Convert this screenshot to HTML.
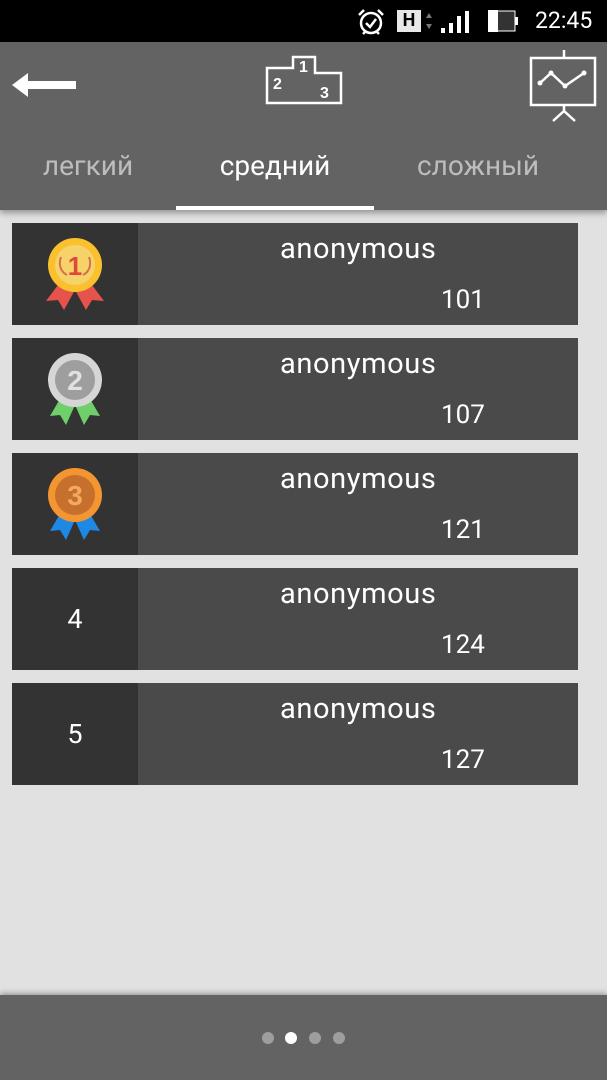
<!DOCTYPE html>
<html><head><meta charset="utf-8"><style>
*{margin:0;padding:0;box-sizing:border-box}
body{width:607px;height:1080px;background:#e1e1e1;font-family:"Roboto","Liberation Sans",sans-serif;position:relative;overflow:hidden}
.sb{position:absolute;left:0;top:0;width:607px;height:42px;background:#000;color:#fff}
.tb{position:absolute;left:0;top:42px;width:607px;height:168px;background:#636363;box-shadow:0 3px 6px rgba(0,0,0,.35)}
.tab{position:absolute;font-size:28px;color:#bdbdbd;text-align:center;width:200px}
.row{position:absolute;left:12px;width:566px;height:102px;background:#4a4a4a}
.row .l{position:absolute;left:0;top:0;width:126px;height:102px;background:#333;color:#fff;font-size:27px;text-align:center;line-height:102px}
.row .n{position:absolute;left:268px;top:9px;color:#fff;font-size:29px;letter-spacing:0.6px}
.row .s{position:absolute;left:429px;top:62px;color:#fff;font-size:26px}
.bb{position:absolute;left:0;top:995px;width:607px;height:85px;background:#636363;box-shadow:0 -2px 5px rgba(0,0,0,.3)}
.dot{position:absolute;top:1032px;width:12px;height:12px;border-radius:50%;background:#9e9e9e}
</style></head><body>
<div class="sb">
<svg style="position:absolute;left:355px;top:7px" width="32" height="30" viewBox="0 0 32 30"><circle cx="16" cy="16" r="10" fill="none" stroke="#fff" stroke-width="2.5"/><path d="M11 16l4 4 6-8" stroke="#fff" stroke-width="2.5" fill="none"/><path d="M4 8l5-5M28 8l-5-5M8 27l3-3M24 27l-3-3" stroke="#fff" stroke-width="2.5"/></svg>
<div style="position:absolute;left:397px;top:10px;width:24px;height:22px;background:#e8e8e8;color:#000;font-weight:bold;font-size:18px;text-align:center;line-height:22px">H</div>
<svg style="position:absolute;left:424px;top:10px" width="46" height="24"><path d="M2 8l3-5 3 5zM2 14l3 5 3-5z" fill="#777"/><rect x="17" y="18" width="4" height="5" fill="#fff"/><rect x="25" y="13" width="4" height="10" fill="#fff"/><rect x="33" y="6" width="4" height="17" fill="#fff"/><rect x="41" y="1" width="4" height="22" fill="#fff"/></svg>
<svg style="position:absolute;left:488px;top:10px" width="32" height="22"><rect x="1" y="1" width="26" height="20" fill="#333" stroke="#fff" stroke-width="1"/><rect x="0" y="0" width="10" height="22" fill="#fff"/><rect x="27" y="7" width="3" height="8" fill="#fff"/></svg>
<div style="position:absolute;left:535px;top:7px;font-size:23px">22:45</div>
</div>
<div class="tb">
<svg style="position:absolute;left:10px;top:26px" width="66" height="34"><path d="M2 17L18 5v8h56v8H18v8z" fill="#fff"/></svg>
<svg style="position:absolute;left:264px;top:6px" width="80" height="58" viewBox="0 0 80 58"><path d="M3 37V20h26V9h22v16h26v30H3z" fill="none" stroke="#fff" stroke-width="2.5"/><text x="35" y="24" fill="#fff" font-size="16" font-weight="bold" font-family="Liberation Sans">1</text><text x="9" y="41" fill="#fff" font-size="16" font-weight="bold" font-family="Liberation Sans">2</text><text x="56" y="50" fill="#fff" font-size="16" font-weight="bold" font-family="Liberation Sans">3</text></svg>
<svg style="position:absolute;left:528px;top:8px" width="72" height="72" viewBox="0 0 72 72"><path d="M36 0v8" stroke="#fff" stroke-width="2.5"/><rect x="3" y="8" width="64" height="47" fill="none" stroke="#fff" stroke-width="2.5"/><path d="M12 33l11-10 14 13 19-13" stroke="#fff" stroke-width="2.5" fill="none"/><circle cx="12" cy="33" r="2.5" fill="#fff"/><circle cx="23" cy="23" r="2.5" fill="#fff"/><circle cx="37" cy="36" r="2.5" fill="#fff"/><circle cx="56" cy="23" r="2.5" fill="#fff"/><path d="M36 55v6M36 61l-11 10M36 61l11 10" stroke="#fff" stroke-width="2.5"/></svg>
<div class="tab" style="left:-12px;top:107px">легкий</div>
<div class="tab" style="left:175px;top:107px;color:#fff">средний</div>
<div class="tab" style="left:378px;top:107px">сложный</div>
<div style="position:absolute;left:176px;top:164px;width:198px;height:4px;background:#fff"></div>
</div>

<div class="row" style="top:223px"><div class="l"><svg style="position:absolute;left:30px;top:12px" width="66" height="78" viewBox="0 0 66 78"><path d="M22 42L4 66l12-1 6 10 11-20z" fill="#e5534b"/><path d="M44 42l18 24-12-1-6 10-11-20z" fill="#e5534b"/><circle cx="33" cy="30" r="27" fill="#fbc02d"/><circle cx="33" cy="30" r="20" fill="#f6d36a"/><text x="33" y="40" text-anchor="middle" fill="#e0483b" font-size="26" font-weight="bold" font-family="Liberation Sans">1</text><path d="M19 22c-3 8 0 15 6 18M47 22c3 8 0 15-6 18" stroke="#d9704a" stroke-width="2" fill="none"/></svg></div><div class="n">anonymous</div><div class="s">101</div></div>
<div class="row" style="top:338px"><div class="l"><svg style="position:absolute;left:30px;top:12px" width="66" height="78" viewBox="0 0 66 78"><path d="M22 42L8 66l10-1 6 10 9-20z" fill="#6fcf6a"/><path d="M44 42l14 24-10-1-6 10-9-20z" fill="#6fcf6a"/><circle cx="33" cy="30" r="27" fill="#d6d6d6"/><circle cx="33" cy="30" r="20" fill="#9e9e9e"/><text x="33" y="40" text-anchor="middle" fill="#e0e0e0" font-size="28" font-weight="bold" font-family="Liberation Sans">2</text></svg></div><div class="n">anonymous</div><div class="s">107</div></div>
<div class="row" style="top:453px"><div class="l"><svg style="position:absolute;left:30px;top:12px" width="66" height="78" viewBox="0 0 66 78"><path d="M22 42L8 66l10-1 6 10 9-20z" fill="#1e88e5"/><path d="M44 42l14 24-10-1-6 10-9-20z" fill="#1e88e5"/><circle cx="33" cy="30" r="27" fill="#f39530"/><circle cx="33" cy="30" r="20" fill="#c7702e"/><text x="33" y="40" text-anchor="middle" fill="#f4a860" font-size="28" font-weight="bold" font-family="Liberation Sans">3</text></svg></div><div class="n">anonymous</div><div class="s">121</div></div>
<div class="row" style="top:568px"><div class="l">4</div><div class="n">anonymous</div><div class="s">124</div></div>
<div class="row" style="top:683px"><div class="l">5</div><div class="n">anonymous</div><div class="s">127</div></div>

<div class="bb"></div>
<div class="dot" style="left:262px"></div>
<div class="dot" style="left:285px;background:#fff"></div>
<div class="dot" style="left:309px"></div>
<div class="dot" style="left:333px"></div>
</body></html>
